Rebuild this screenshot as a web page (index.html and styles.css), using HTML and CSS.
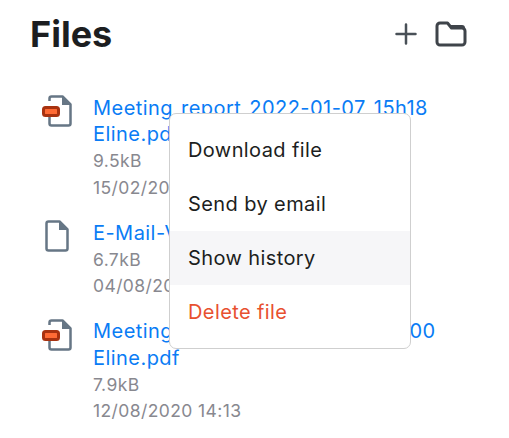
FILE: index.html
```html
<!DOCTYPE html>
<html>
<head>
  <title>Files</title>
  <meta charset="UTF-8" />
  <link rel="stylesheet" href="styles.css">
</head>
<body>
  <div class="panel">
    <!-- Heading with add and folder actions -->
    <div class="header">
      <h1>Files</h1>
      <div class="actions">
        <svg class="icon-plus" width="24" height="24" viewBox="0 0 24 24"><path d="M12 2.500v19M2.500 12h19"/></svg>
        <svg class="icon-folder" width="32" height="26" viewBox="0 0 32 26"><path d="M2 5a3 3 0 0 1 3-3h7.500l4 5H27a3 3 0 0 1 3 3v11a3 3 0 0 1-3 3H5a3 3 0 0 1-3-3z"/><path class="fill" d="M12.500 2l4 5H30a3 3 0 0 0-3-3H14z"/></svg>
      </div>
    </div>

    <ul class="files">
      <li class="file">
        <svg class="file-icon" width="32" height="32" viewBox="0 0 32 32"><path class="sheet" d="M7.500 6V3.500a2 2 0 0 1 2-2h11l8 8V28.500a2 2 0 0 1-2 2h-17a2 2 0 0 1-2-2V22"/><path class="fold" d="M20 2v8h8z"/><rect class="badge" x="1.500" y="12.500" width="15" height="8" rx="2"/></svg>
        <div class="file-info">
          <a href="#">Meeting report 2022-01-07 15h18 Eline.pdf</a>
          <div class="meta">9.5kB</div>
          <div class="meta">15/02/2022 09:41</div>
        </div>
      </li>
      <li class="file">
        <svg class="file-icon" width="32" height="32" viewBox="0 0 32 32"><path class="sheet" d="M4.500 3.500a2 2 0 0 1 2-2h11l8 8V28.500a2 2 0 0 1-2 2h-17a2 2 0 0 1-2-2z"/><path class="fold" d="M17 2v8h8z"/></svg>
        <div class="file-info">
          <a href="#">E-Mail-Vorlage.txt</a>
          <div class="meta">6.7kB</div>
          <div class="meta">04/08/2020 10:22</div>
        </div>
      </li>
      <li class="file">
        <svg class="file-icon" width="32" height="32" viewBox="0 0 32 32"><path class="sheet" d="M7.500 6V3.500a2 2 0 0 1 2-2h11l8 8V28.500a2 2 0 0 1-2 2h-17a2 2 0 0 1-2-2V22"/><path class="fold" d="M20 2v8h8z"/><rect class="badge" x="1.500" y="12.500" width="15" height="8" rx="2"/></svg>
        <div class="file-info">
          <a href="#">Meeting report 2020-08-12 14h00 Eline.pdf</a>
          <div class="meta">7.9kB</div>
          <div class="meta">12/08/2020 14:13</div>
        </div>
      </li>
    </ul>

    <!-- Context menu of the first file -->
    <div class="menu">
      <div class="menu-item">Download file</div>
      <div class="menu-item">Send by email</div>
      <div class="menu-item active">Show history</div>
      <div class="menu-item danger">Delete file</div>
    </div>
  </div>
</body>
</html>
```
FILE: styles.css
```css
body {
  margin: 0;
  font-family: Inter, sans-serif;
  color: #1c1e21;
  background: #fff;
}

.panel {
  position: relative;
  padding: 12px 30px 0;
  height: 426px;
  overflow: hidden;
}

/* Heading row */
.header {
  display: flex;
  align-items: center;
  justify-content: space-between;
  height: 44px;
}

h1 {
  margin: 0;
  font-size: 36px;
  font-weight: 700;
  line-height: 44px;
  color: #1c1e21;
}

.actions {
  display: flex;
  align-items: center;
  gap: 17px;
  padding-right: 12px;
}

.icon-plus path {
  fill: none;
  stroke: #495057;
  stroke-width: 2.500;
  stroke-linecap: round;
}

.icon-folder path {
  fill: none;
  stroke: #3f444a;
  stroke-width: 3;
  stroke-linejoin: round;
}

.icon-folder path.fill {
  fill: #3f444a;
  stroke: none;
}

/* File list */
.files {
  list-style: none;
  margin: 39px 0 0;
  padding: 0;
}

.file {
  display: flex;
  gap: 19px;
  margin-bottom: 18.600px;
  margin-left: 12px;
}

.file-icon {
  flex: none;
}

.sheet {
  fill: none;
  stroke: #667685;
  stroke-width: 2.500;
  stroke-linejoin: round;
}

.fold {
  fill: #667685;
}

.badge {
  fill: #ff6b35;
  stroke: #a83210;
  stroke-width: 3;
}

.file-info {
  width: 350px;
  margin-top: -0.3px;
}

.file-info a {
  display: block;
  font-size: 20px;
  line-height: 26.700px;
  letter-spacing: 0.45px;
  word-spacing: 2px;
  color: #0a7cf5;
  text-decoration: none;
}

.meta {
  font-size: 17.500px;
  line-height: 26.700px;
  letter-spacing: 0.4px;
  color: #88888f;
}

/* Context menu */
.menu {
  position: absolute;
  left: 169px;
  top: 113px;
  width: 240px;
  padding: 9px 0;
  background: #fff;
  border: 1px solid #cfcfcf;
  border-radius: 7px;
}

.menu-item {
  height: 54px;
  padding: 0 18px;
  font-size: 20px;
  line-height: 54px;
  letter-spacing: 0.4px;
  color: #1c1e21;
}

.menu-item.active {
  background: #f6f6f8;
}

.menu-item.danger {
  color: #e8502f;
}
```
